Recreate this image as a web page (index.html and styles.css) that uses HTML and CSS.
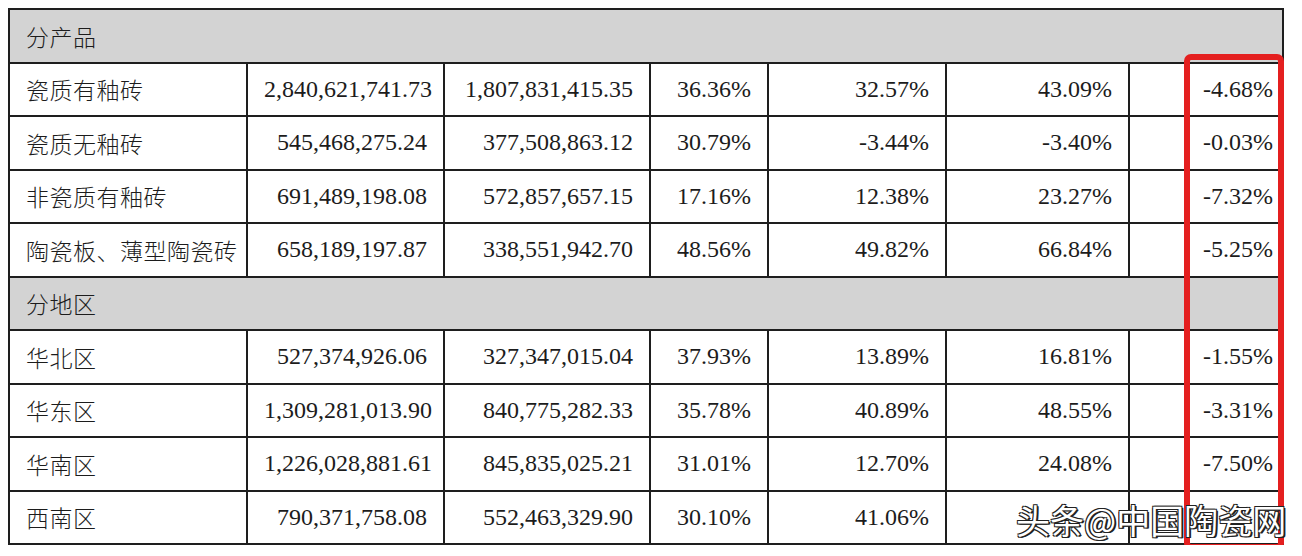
FILE: index.html
```html
<!DOCTYPE html>
<html lang="zh-CN">
<head>
<meta charset="utf-8">
<link rel="stylesheet" href="styles.css">
</head>
<body>
<div class="wrap">
  <table class="data">
    <colgroup>
      <col class="c1"><col class="c2"><col class="c3"><col class="c4"><col class="c5"><col class="c6"><col class="c7"><col class="c8">
    </colgroup>
    <tr class="sec"><td colspan="8">分产品</td></tr>
    <tr><td class="name">瓷质有釉砖</td><td>2,840,621,741.73</td><td>1,807,831,415.35</td><td>36.36%</td><td>32.57%</td><td>43.09%</td><td></td><td>-4.68%</td></tr>
    <tr><td class="name">瓷质无釉砖</td><td>545,468,275.24</td><td>377,508,863.12</td><td>30.79%</td><td>-3.44%</td><td>-3.40%</td><td></td><td>-0.03%</td></tr>
    <tr><td class="name">非瓷质有釉砖</td><td>691,489,198.08</td><td>572,857,657.15</td><td>17.16%</td><td>12.38%</td><td>23.27%</td><td></td><td>-7.32%</td></tr>
    <tr><td class="name">陶瓷板、薄型陶瓷砖</td><td>658,189,197.87</td><td>338,551,942.70</td><td>48.56%</td><td>49.82%</td><td>66.84%</td><td></td><td>-5.25%</td></tr>
    <tr class="sec"><td colspan="8">分地区</td></tr>
    <tr><td class="name">华北区</td><td>527,374,926.06</td><td>327,347,015.04</td><td>37.93%</td><td>13.89%</td><td>16.81%</td><td></td><td>-1.55%</td></tr>
    <tr><td class="name">华东区</td><td>1,309,281,013.90</td><td>840,775,282.33</td><td>35.78%</td><td>40.89%</td><td>48.55%</td><td></td><td>-3.31%</td></tr>
    <tr><td class="name">华南区</td><td>1,226,028,881.61</td><td>845,835,025.21</td><td>31.01%</td><td>12.70%</td><td>24.08%</td><td></td><td>-7.50%</td></tr>
    <tr><td class="name">西南区</td><td>790,371,758.08</td><td>552,463,329.90</td><td>30.10%</td><td>41.06%</td><td></td><td></td><td></td></tr>
  </table>
  <div class="redbox"></div>
  <div class="watermark">头条@中国陶瓷网</div>
</div>
</body>
</html>
```
FILE: styles.css
```css
html, body {
  margin: 0;
  padding: 0;
  background: #ffffff;
}
body {
  padding: 8px 0 0 8px;
}
.wrap {
  position: relative;
  width: 1276px;
}
.data {
  border-collapse: collapse;
  table-layout: fixed;
  width: 1276px;
  font-family: "Liberation Serif", "Noto Sans CJK SC", serif;
  font-size: 24px;
  color: #1c1c1c;
}
.c1 { width: 238px; }
.c2 { width: 197px; }
.c3 { width: 206px; }
.c4 { width: 118px; }
.c5 { width: 178px; }
.c6 { width: 183px; }
.c7 { width: 57px; }
.c8 { width: 97px; }
.data td {
  border: 2px solid #1e1e1e;
  height: 51.5px;
  padding: 0 16px 0 16px;
  text-align: right;
  white-space: nowrap;
  vertical-align: middle;
}
.data td.name {
  text-align: left;
  font-family: "Noto Sans CJK SC", sans-serif;
  font-size: 23px;
  font-weight: 300;
  letter-spacing: 0.5px;
}
.data tr.sec td {
  background: #d3d3d3;
  text-align: left;
  font-family: "Noto Sans CJK SC", sans-serif;
  font-size: 23px;
  font-weight: 300;
  letter-spacing: 0.5px;
}
.redbox {
  position: absolute;
  left: 1176px;
  top: 46px;
  width: 88px;
  height: 484px;
  border: 6px solid #e41f1f;
  border-radius: 7px;
}
.watermark {
  position: absolute;
  left: 1008px;
  top: 492px;
  white-space: nowrap;
  font-family: "Noto Sans CJK SC", sans-serif;
  font-size: 34px;
  font-weight: 400;
  color: #ffffff;
  line-height: 40px;
  text-shadow: 1px 1px 0 #222, -1px -1px 0 #222, 1px -1px 0 #222, -1px 1px 0 #222, 2px 1px 0 #222;
}
```
